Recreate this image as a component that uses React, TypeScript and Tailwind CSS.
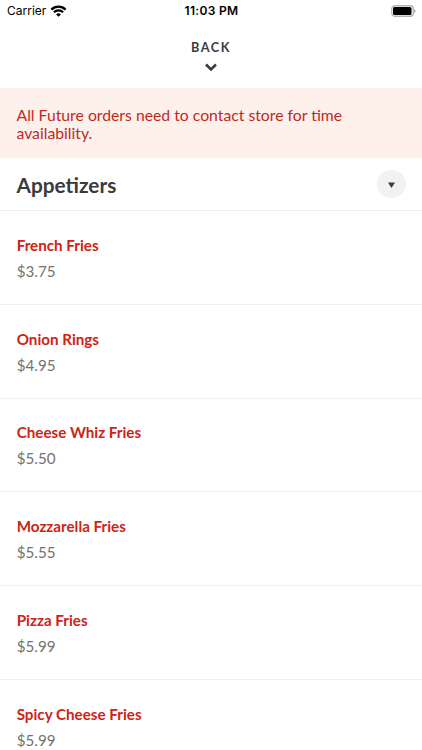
interface MenuItem {
  name: string;
  price: string;
}

const items: MenuItem[] = [
  { name: 'French Fries', price: '$3.75' },
  { name: 'Onion Rings', price: '$4.95' },
  { name: 'Cheese Whiz Fries', price: '$5.50' },
  { name: 'Mozzarella Fries', price: '$5.55' },
  { name: 'Pizza Fries', price: '$5.99' },
  { name: 'Spicy Cheese Fries', price: '$5.99' },
];

function StatusBar() {
  return (
    <div className="grid h-[22px] grid-cols-3 items-center pl-[7px] pr-[6px] font-['Inter',sans-serif] text-black">
      <div className="flex items-center gap-1">
        <span className="text-[12px] leading-[18px]">Carrier</span>
        <svg className="mb-px" width="17" height="12" viewBox="0 0 16 12" fill="none" stroke="currentColor" strokeWidth="2.3">
          <path d="M0.9 4.6a10.2 10.2 0 0 1 14.2 0" />
          <path d="M3.4 7.3a6.6 6.6 0 0 1 9.2 0" />
          <path d="M8 11.8 5.6 9.4a3.5 3.5 0 0 1 4.8 0z" fill="currentColor" stroke="none" />
        </svg>
      </div>
      <span className="whitespace-nowrap text-center text-[12px] font-semibold leading-[18px] tracking-[0.3px]">11:03 PM</span>
      <svg className="mb-px justify-self-end" width="25" height="12" viewBox="0 0 25 12">
        <rect x="0.75" y="0.75" width="21.5" height="10.5" rx="3" fill="none" stroke="#b3b3b3" strokeWidth="1.3" />
        <rect x="2" y="2" width="18.5" height="8" rx="1.5" />
        <path d="M23.3 4.3v3.4c.8-.3 1.2-1 1.2-1.7s-.4-1.4-1.2-1.7z" fill="#8f8f8f" />
      </svg>
    </div>
  );
}

export default function App() {
  return (
    <div className="h-[750px] overflow-hidden bg-white font-['Lato',sans-serif] text-[#3b3b3d]">
      <StatusBar />

      <button className="flex h-[66px] w-full flex-col items-center pt-4">
        <span className="text-[12.7px] font-bold leading-[18px] tracking-[1.5px]">BACK</span>
        <svg className="mr-px mt-[7px]" width="12" height="9" viewBox="0 0 12 9" fill="none" stroke="currentColor" strokeWidth="2.6">
          <path d="M1 1.5 6 6.5 11 1.5" />
        </svg>
      </button>

      <div className="h-[70px] bg-[#fef1ec] px-[16.5px] pt-[17.5px] text-[15.75px] leading-[18px] text-[#bf2a1e]">
        All Future orders need to contact store for time availability.
      </div>

      <div className="flex h-[53px] items-center justify-between border-b border-[#ececec] px-[16.5px]">
        <h1 className="pt-px text-[20.8px] font-bold">Appetizers</h1>
        <button className="flex size-[28.5px] items-center justify-center rounded-full bg-[#f2f2f2]">
          <svg className="ml-px mt-px" width="7" height="6" viewBox="0 0 7 6" fill="currentColor">
            <path d="M0 0.5h7L3.5 6z" />
          </svg>
        </button>
      </div>

      <ul>
        {items.map((item) => (
          <li key={item.name} className="h-[93.8px] border-b border-[#f0f0f0] px-[16.7px] pt-[22.8px]">
            <p className="text-[15.2px] font-bold leading-[22px] text-[#cc2415]">{item.name}</p>
            <p className="mt-1 text-[15.2px] leading-[22px] text-[#737373]">{item.price}</p>
          </li>
        ))}
      </ul>
    </div>
  );
}
